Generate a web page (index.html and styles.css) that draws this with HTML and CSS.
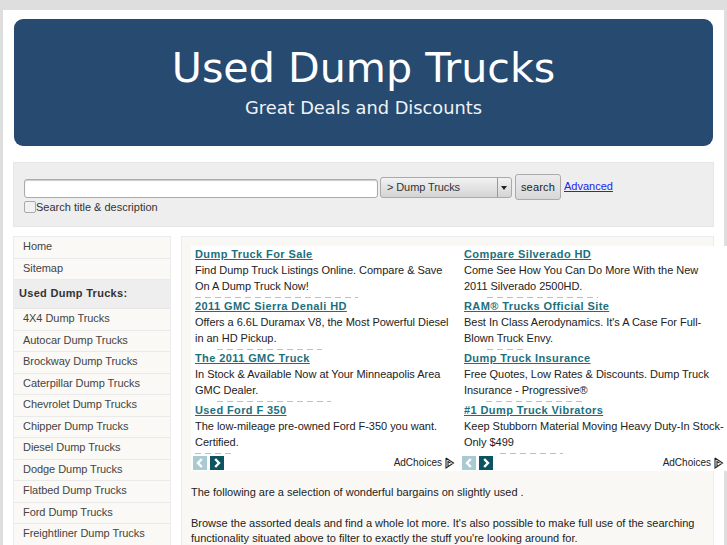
FILE: index.html
```html
<!DOCTYPE html>
<html lang="en">
<head>
<meta charset="utf-8">
<title>Used Dump Trucks</title>
<link rel="stylesheet" href="styles.css">
</head>
<body>
<div class="wrapper">
  <header class="banner">
    <h1>Used Dump Trucks</h1>
    <p>Great Deals and Discounts</p>
  </header>
  <form class="search">
    <div class="search-main">
      <input class="search-input" type="text" aria-label="Search">
      <label class="search-check"><input type="checkbox">Search title &amp; description</label>
    </div>
    <div class="select"><span class="select-label">&gt; Dump Trucks</span><span class="select-arrow"></span></div>
    <button class="search-btn" type="button">search</button>
    <a class="advanced" href="#">Advanced</a>
  </form>
  <div class="columns">
    <nav class="nav">
      <a href="#">Home</a>
      <a href="#">Sitemap</a>
      <h2>Used Dump Trucks:</h2>
      <a href="#">4X4 Dump Trucks</a>
      <a href="#">Autocar Dump Trucks</a>
      <a href="#">Brockway Dump Trucks</a>
      <a href="#">Caterpillar Dump Trucks</a>
      <a href="#">Chevrolet Dump Trucks</a>
      <a href="#">Chipper Dump Trucks</a>
      <a href="#">Diesel Dump Trucks</a>
      <a href="#">Dodge Dump Trucks</a>
      <a href="#">Flatbed Dump Trucks</a>
      <a href="#">Ford Dump Trucks</a>
      <a href="#">Freightliner Dump Trucks</a>
    </nav>
    <main class="content">
      <div class="ads">
        <section class="ad-unit">
          <div class="ad"><a href="#">Dump Truck For Sale</a><p>Find Dump Truck Listings Online. Compare &amp; Save On A Dump Truck Now!</p><span class="ad-url u1"></span></div>
          <div class="ad"><a href="#">2011 GMC Sierra Denali HD</a><p>Offers a 6.6L Duramax V8, the Most Powerful Diesel in an HD Pickup.</p><span class="ad-url u2"></span></div>
          <div class="ad"><a href="#">The 2011 GMC Truck</a><p>In Stock &amp; Available Now at Your Minneapolis Area GMC Dealer.</p><span class="ad-url u3"></span></div>
          <div class="ad"><a href="#">Used Ford F 350</a><p>The low-mileage pre-owned Ford F-350 you want. Certified.</p><span class="ad-url u4"></span></div>
          <div class="ad-foot">
            <span class="ad-arrow ad-arrow-off"><svg width="14" height="14" viewBox="0 0 14 14"><path d="M8.800 3 5 7l3.800 4" fill="none" stroke="#fff" stroke-width="2.400"/></svg></span>
            <span class="ad-arrow"><svg width="14" height="14" viewBox="0 0 14 14"><path d="M5.200 3 9 7l-3.800 4" fill="none" stroke="#fff" stroke-width="2.400"/></svg></span>
            <span class="adchoices">AdChoices<svg width="11" height="12" viewBox="0 0 11 12"><path d="M2 1v10l2-1.200M2 1l7.500 5-5.500 3.800V4.500L6.500 6" fill="none" stroke="#222" stroke-width="1.100"/></svg></span>
          </div>
        </section>
        <section class="ad-unit">
          <div class="ad"><a href="#">Compare Silverado HD</a><p>Come See How You Can Do More With the New 2011 Silverado 2500HD.</p><span class="ad-url u5"></span></div>
          <div class="ad"><a href="#">RAM® Trucks Official Site</a><p>Best In Class Aerodynamics. It's A Case For Full-Blown Truck Envy.</p><span class="ad-url u6"></span></div>
          <div class="ad"><a href="#">Dump Truck Insurance</a><p>Free Quotes, Low Rates &amp; Discounts. Dump Truck Insurance - Progressive®</p><span class="ad-url u7"></span></div>
          <div class="ad"><a href="#">#1 Dump Truck Vibrators</a><p>Keep Stubborn Material Moving Heavy Duty-In Stock-Only $499</p><span class="ad-url u8"></span></div>
          <div class="ad-foot">
            <span class="ad-arrow ad-arrow-off"><svg width="14" height="14" viewBox="0 0 14 14"><path d="M8.800 3 5 7l3.800 4" fill="none" stroke="#fff" stroke-width="2.400"/></svg></span>
            <span class="ad-arrow"><svg width="14" height="14" viewBox="0 0 14 14"><path d="M5.200 3 9 7l-3.800 4" fill="none" stroke="#fff" stroke-width="2.400"/></svg></span>
            <span class="adchoices">AdChoices<svg width="11" height="12" viewBox="0 0 11 12"><path d="M2 1v10l2-1.200M2 1l7.500 5-5.500 3.800V4.500L6.500 6" fill="none" stroke="#222" stroke-width="1.100"/></svg></span>
          </div>
        </section>
      </div>
      <p class="copy">The following are a selection of wonderful bargains on slightly used .</p>
      <p class="copy">Browse the assorted deals and find a whole lot more. It's also possible to make full use of the searching functionality situated above to filter to exactly the stuff you're looking around for.</p>
    </main>
  </div>
</div>
</body>
</html>
```
FILE: styles.css
```css
* { box-sizing: border-box; }
html, body { height: 545px; overflow: hidden; }
body {
  margin: 0;
  background: #dedede;
  font-family: "Liberation Sans", Arial, sans-serif;
  font-size: 11px;
  color: #222;
}
.wrapper {
  width: 721px;
  height: 535px;
  margin: 10px 0 0 3px;
  padding: 9px 10px 0;
  background: #fff;
}
.banner {
  height: 127px;
  margin: 0 1px;
  padding-top: 21px;
  border-radius: 9px;
  background: #264a70;
  color: #fff;
  text-align: center;
  font-family: "DejaVu Sans", sans-serif;
}
.banner h1 { margin: 0; font-size: 41.2px; font-weight: 400; line-height: 56px; }
.banner p { margin: 1px 0 0; font-size: 17.8px; line-height: 22px; color: #f0f3f6; }
.search {
  display: flex;
  align-items: flex-start;
  height: 65px;
  margin-top: 16px;
  padding: 11px 10px 0;
  background: #eee;
  border: 1px solid #e6e6e6;
}
.search-main { width: 354px; padding-top: 5px; }
.search-input {
  display: block;
  width: 354px;
  height: 19px;
  padding: 0 3px;
  background: #fff;
  border: 1px solid #aaa;
  border-radius: 3px;
  box-shadow: inset 0 1px 1px #ccc;
}
.search-check {
  display: flex;
  align-items: center;
  height: 13px;
  margin-top: 2px;
  color: #333;
}
.search-check input {
  width: 12px;
  height: 12px;
  margin: 0;
  appearance: none;
  background: #f1f1f1;
  border: 1px solid #aaa;
  border-radius: 2px;
}
.select {
  display: flex;
  width: 132px;
  height: 21px;
  margin: 3px 0 0 2px;
  border: 1px solid #aaa;
  border-radius: 3px;
  background: linear-gradient(#f2f2f2, #d4d4d6);
  letter-spacing: -.1px;
}
.select-label { flex: 1; padding-left: 6px; line-height: 19px; color: #333; }
.select-arrow {
  position: relative;
  width: 14px;
  border-left: 1px solid #999;
}
.select-arrow::after {
  content: "";
  position: absolute;
  top: 8px;
  left: 3px;
  border: 3.5px solid transparent;
  border-top: 4px solid #222;
  border-bottom: 0;
}
.search-btn {
  width: 46px;
  height: 26px;
  margin-left: 3px;
  padding: 0;
  border: 1px solid #aaa;
  border-radius: 3px;
  background: linear-gradient(#ececec, #d8d8d8);
  font: 11px "Liberation Sans", Arial, sans-serif;
  letter-spacing: .2px;
  color: #222;
}
.advanced {
  margin: 6px 0 0 3px;
  color: #2222ee;
}
.columns { display: flex; gap: 10px; margin-top: 9px; align-items: flex-start; }
.nav {
  flex: none;
  width: 158px;
  border: 1px solid #ececec;
  border-bottom: 0;
  background: #faf9f6;
}
.nav a {
  display: block;
  padding: 1px 9px 3px;
  border-bottom: 1px solid #e9e9e9;
  line-height: 16.5px;
  color: #444;
  text-decoration: none;
  letter-spacing: -.05px;
}
.nav h2 {
  margin: 0;
  padding: 5px 5px 6px;
  height: 29px;
  background: #eee;
  border-bottom: 1px solid #e6e6e6;
  font-size: 11px;
  line-height: 17px;
  color: #333;
  letter-spacing: .3px;
}
.content {
  flex: none;
  width: 533px;
  height: 320px;
  padding: 9px 0 0 9px;
  background: #f9f8f5;
  border: 1px solid #e8ebf1;
  border-bottom: 0;
}
.ads { display: flex; width: 538px; background: #fff; }
.ad-unit { flex: none; width: 269px; height: 225px; padding: 0 5px 0 4px; }
.ad { height: 52px; overflow: hidden; }
.ad a {
  display: block;
  padding-top: 1px;
  font-size: 11px;
  font-weight: 700;
  line-height: 15px;
  letter-spacing: .4px;
  color: #1d6f7d;
}
.ad p { margin: 1px 0 0; line-height: 15.5px; letter-spacing: -.03px; color: #222; }
.ad-url {
  display: block;
  height: 1px;
  margin-top: 3px;
  background: repeating-linear-gradient(90deg, #7fd8ea 0 6px, transparent 6px 10px);
}
.u1 { margin-left: 0; width: 163px; }
.u2 { margin-left: 22px; width: 105px; }
.u3 { margin-left: 22px; width: 114px; }
.u4 { margin-left: 0; width: 37px; }
.u5 { margin-left: 23px; width: 111px; }
.u6 { margin-left: 23px; width: 37px; }
.u7 { margin-left: 22px; width: 96px; }
.u8 { margin-left: 36px; width: 63px; }
.ad-foot { display: flex; align-items: center; gap: 3px; height: 15px; margin: 1px 0 0 -2px; }
.ad-arrow { display: flex; width: 14px; height: 14px; background: #0c5560; }
.ad-arrow-off { background: #a9cad0; }
.adchoices {
  display: flex;
  align-items: center;
  gap: 2px;
  margin: 0 0 0 auto;
  font-size: 10px;
}
.copy { margin: 0 0 16px; width: 520px; line-height: 15px; color: #222; }
.ads + .copy { margin-top: 14px; }
```
